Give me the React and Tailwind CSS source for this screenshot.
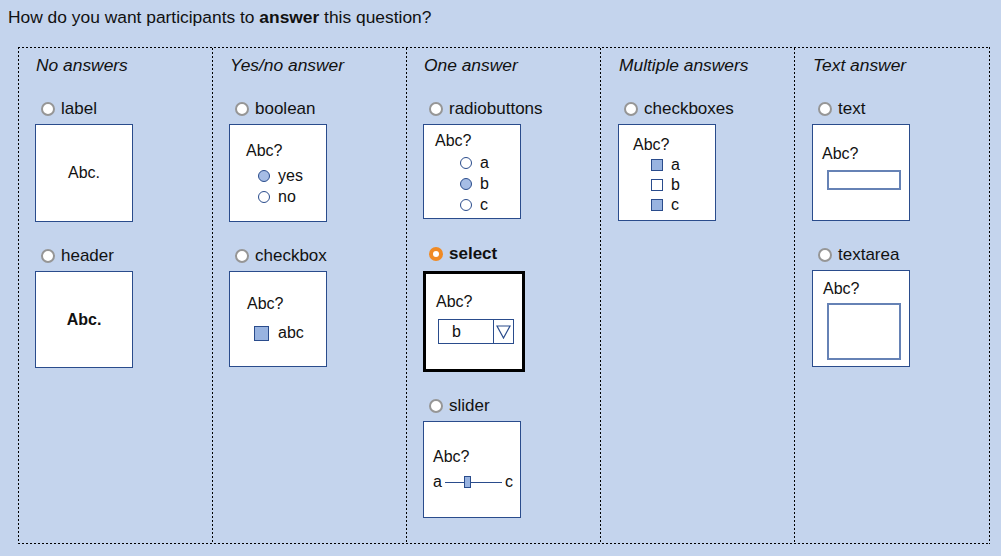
import React from "react";

const cardBase = "bg-white border border-[#2a4c8c] text-[16px] leading-[20px]";

function Radio({ selected }) {
  if (selected) {
    return (
      <span className="w-[14px] h-[14px] rounded-full bg-[#f08a24] flex items-center justify-center shrink-0">
        <span className="w-[6px] h-[6px] rounded-full bg-white" />
      </span>
    );
  }
  return <span className="w-[14px] h-[14px] rounded-full bg-white border-2 border-[#969696] shrink-0" />;
}

function Label({ children, selected, className = "" }) {
  return (
    <div className={"flex items-center h-[20px] pl-[6px] gap-[6px] text-[17px] " + (selected ? "font-bold " : "") + className}>
      <Radio selected={selected} />
      <span>{children}</span>
    </div>
  );
}

function Dot({ filled }) {
  return (
    <span
      className={
        "w-[12px] h-[12px] rounded-full border-[1.5px] border-[#2a4c8c] shrink-0 " +
        (filled ? "bg-[#a6bde5]" : "bg-white")
      }
    />
  );
}

function Square({ filled }) {
  return (
    <span
      className={
        "w-[12px] h-[12px] border border-[#2a4c8c] shrink-0 " + (filled ? "bg-[#98b3e0]" : "bg-white")
      }
    />
  );
}

function Column({ title, children, last, shift }) {
  return (
    <div
      className={
        "pt-[7px] pb-[25px] " +
        (shift ? "pl-[17px] " : "pl-[16px] ") +
        (last
          ? ""
          : "bg-no-repeat [background-image:repeating-linear-gradient(to_bottom,#000_0_2px,transparent_2px_4px)] [background-size:1px_100%] [background-position:right_top]")
      }
    >
      <div className="pl-[1px] italic text-[17.4px] leading-[20px]">{title}</div>
      {children}
    </div>
  );
}

export default function App() {
  return (
    <div className="w-[1001px] h-[556px] bg-[#c4d4ed] text-[#111] overflow-hidden font-['Liberation_Sans',Arial,sans-serif]">
      <div className="pt-[7px] pl-[8px] text-[17.4px] leading-[20px]">
        How do you want participants to <b>answer</b> this question?
      </div>
      <div className="ml-[18px] mt-[20px] w-[972px] p-[1px] grid grid-cols-5 bg-no-repeat [background-image:repeating-linear-gradient(to_right,#000_0_2px,transparent_2px_4px),repeating-linear-gradient(to_right,#000_0_2px,transparent_2px_4px),repeating-linear-gradient(to_bottom,#000_0_2px,transparent_2px_4px),repeating-linear-gradient(to_bottom,#000_0_2px,transparent_2px_4px)] [background-size:100%_1px,100%_1px,1px_100%,1px_100%] [background-position:left_top,left_bottom,left_top,right_top]">
        {/* No answers */}
        <Column title="No answers">
          <Label className="mt-[24px]">label</Label>
          <div className={cardBase + " mt-[5px] w-[98px] h-[98px] flex items-center justify-center"}>Abc.</div>
          <Label className="mt-[24px]">header</Label>
          <div className={cardBase + " mt-[5px] w-[98px] h-[97px] flex items-center justify-center font-bold"}>Abc.</div>
        </Column>

        {/* Yes/no */}
        <Column title="Yes/no answer">
          <Label className="mt-[24px]">boolean</Label>
          <div className={cardBase + " mt-[5px] w-[98px] h-[98px] pl-[16px] pt-[16px]"}>
            <div>Abc?</div>
            <div className="mt-[4px] pl-[12px]">
              <div className="flex items-center h-[21px] gap-[8px]">
                <Dot filled />
                <span>yes</span>
              </div>
              <div className="flex items-center h-[21px] gap-[8px]">
                <Dot />
                <span>no</span>
              </div>
            </div>
          </div>
          <Label className="mt-[24px]">checkbox</Label>
          <div className={cardBase + " mt-[5px] w-[98px] h-[96px] pl-[17px] pt-[22px]"}>
            <div>Abc?</div>
            <div className="mt-[9px] ml-[7px] flex items-center h-[20px] gap-[9px]">
              <span className="w-[15px] h-[15px] border border-[#2a4c8c] bg-[#98b3e0]" />
              <span>abc</span>
            </div>
          </div>
        </Column>

        {/* One answer */}
        <Column title="One answer">
          <Label className="mt-[24px]">radiobuttons</Label>
          <div className={cardBase + " mt-[5px] w-[98px] h-[95px] pl-[11px] pt-[6px]"}>
            <div>Abc?</div>
            <div className="mt-[1px] pl-[25px]">
              {["a", "b", "c"].map((t) => (
                <div key={t} className="flex items-center h-[21px] gap-[8px]">
                  <Dot filled={t === "b"} />
                  <span>{t}</span>
                </div>
              ))}
            </div>
          </div>
          <Label className="mt-[25px]" selected>
            select
          </Label>
          <div className="mt-[7px] w-[102px] h-[101px] bg-white border-[3px] border-black text-[16px] leading-[20px] pl-[10px] pt-[18px]">
            <div>Abc?</div>
            <div className="mt-[7px] ml-[2px] flex w-[76px] h-[25px] border border-[#2a4c8c]">
              <div className="w-[54px] pl-[13px] flex items-center">b</div>
              <div className="flex-1 border-l border-[#2a4c8c] flex items-center justify-center">
                <svg width="15" height="14" viewBox="0 0 15 14">
                  <polygon points="1,1 14,1 7.5,13" fill="none" stroke="#2a4c8c" strokeWidth="1.2" />
                </svg>
              </div>
            </div>
          </div>
          <Label className="mt-[24px]">slider</Label>
          <div className={cardBase + " mt-[5px] w-[98px] h-[97px] pl-[9px] pt-[25px]"}>
            <div>Abc?</div>
            <div className="mt-[5px] flex items-center h-[20px]">
              <span>a</span>
              <span className="ml-[3px] w-[19px] h-[1px] bg-[#2a4c8c]" />
              <span className="w-[7px] h-[12px] border border-[#2a4c8c] bg-[#98b3e0]" />
              <span className="w-[31px] h-[1px] bg-[#2a4c8c]" />
              <span className="ml-[3px]">c</span>
            </div>
          </div>
        </Column>

        {/* Multiple */}
        <Column title="Multiple answers" shift>
          <Label className="mt-[24px]">checkboxes</Label>
          <div className={cardBase + " mt-[5px] w-[98px] h-[97px] pl-[14px] pt-[10px]"}>
            <div>Abc?</div>
            <div className="pl-[18px]">
              {["a", "b", "c"].map((t) => (
                <div key={t} className="flex items-center h-[20px] gap-[8px]">
                  <Square filled={t !== "b"} />
                  <span>{t}</span>
                </div>
              ))}
            </div>
          </div>
        </Column>

        {/* Text */}
        <Column title="Text answer" last shift>
          <Label className="mt-[24px]">text</Label>
          <div className={cardBase + " mt-[5px] w-[98px] h-[97px] pl-[9px] pt-[19px]"}>
            <div>Abc?</div>
            <div className="mt-[6px] ml-[5px] w-[74px] h-[20px] border-2 border-[#6682b5]" />
          </div>
          <Label className="mt-[24px]">textarea</Label>
          <div className={cardBase + " mt-[5px] w-[98px] h-[97px] pl-[10px] pt-[8px]"}>
            <div>Abc?</div>
            <div className="mt-[4px] ml-[4px] w-[74px] h-[57px] border-2 border-[#6682b5]" />
          </div>
        </Column>
      </div>
    </div>
  );
}
